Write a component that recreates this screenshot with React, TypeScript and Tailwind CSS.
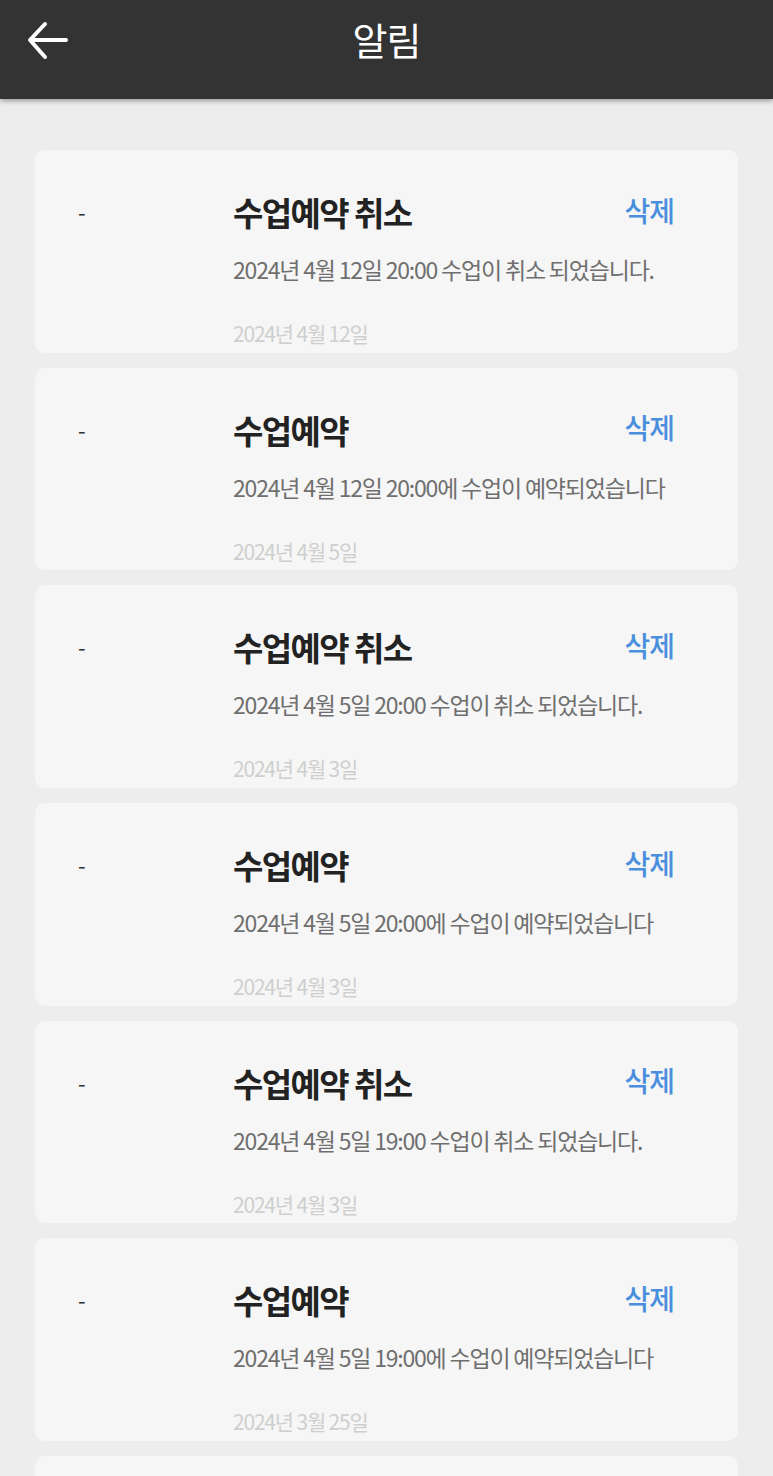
import React from "react";

type Item = { title: string; desc: string; date: string };

const items: Item[] = [
  { title: "수업예약 취소", desc: "2024년 4월 12일 20:00 수업이 취소 되었습니다.", date: "2024년 4월 12일" },
  { title: "수업예약", desc: "2024년 4월 12일 20:00에 수업이 예약되었습니다", date: "2024년 4월 5일" },
  { title: "수업예약 취소", desc: "2024년 4월 5일 20:00 수업이 취소 되었습니다.", date: "2024년 4월 3일" },
  { title: "수업예약", desc: "2024년 4월 5일 20:00에 수업이 예약되었습니다", date: "2024년 4월 3일" },
  { title: "수업예약 취소", desc: "2024년 4월 5일 19:00 수업이 취소 되었습니다.", date: "2024년 4월 3일" },
  { title: "수업예약", desc: "2024년 4월 5일 19:00에 수업이 예약되었습니다", date: "2024년 3월 25일" },
  { title: "수업예약 취소", desc: "2024년 4월 5일 19:00 수업이 취소 되었습니다.", date: "2024년 3월 25일" },
];

const font = "font-['Noto_Sans_CJK_KR','Noto_Sans',sans-serif]";

function Card({ item }: { item: Item }) {
  return (
    <div className="flex h-[202.7px] shrink-0 rounded-[10px] bg-[#f6f6f6]">
      <div className="w-[198px] shrink-0 pl-[43px] pt-[44px]">
        <span className="text-[22px] leading-[34px] text-[#333]">-</span>
      </div>
      <div className="flex flex-1 flex-col pr-[64px] pt-[42px]">
        <div className="flex h-[40px] items-center justify-between">
          <span className="text-[33px] font-bold leading-[40px] tracking-[-1.6px] text-[#222]">{item.title}</span>
          <span className="-mt-[5px] text-[28px] font-medium leading-[36px] tracking-[-1px] text-[#4a8ede]">삭제</span>
        </div>
        <div className="mt-[21px] text-[23px] leading-[32px] tracking-[-1.2px] text-[#6f6f6f]">{item.desc}</div>
        <div className="mt-[34px] text-[21px] leading-[28px] tracking-[-1.2px] text-[#cfcfcf]">{item.date}</div>
      </div>
    </div>
  );
}

export default function App() {
  return (
    <div className={`${font} min-h-screen w-[773px] bg-[#ededed] pb-[40px]`}>
      <header className="relative z-10 flex h-[99px] items-start bg-[#333333] shadow-[0_2px_5px_rgba(0,0,0,0.35)]">
        <div className="flex h-[78px] w-full items-center">
          <div className="flex w-[96px] items-center pl-[26px] pt-[4px]">
            <svg width="44" height="44" viewBox="0 0 44 44" fill="none">
              <path d="M40 21H5M19 5L4 21l15 17" stroke="#fff" strokeWidth="4" strokeLinecap="round" strokeLinejoin="round" />
            </svg>
          </div>
          <div className="flex-1 pr-[96px] text-center text-[38px] font-normal leading-[44px] tracking-[-1px] text-white">알림</div>
        </div>
      </header>
      <main className="flex flex-col gap-[15px] px-[35px] pt-[51px]">
        {items.map((it, i) => (
          <Card key={i} item={it} />
        ))}
      </main>
    </div>
  );
}
